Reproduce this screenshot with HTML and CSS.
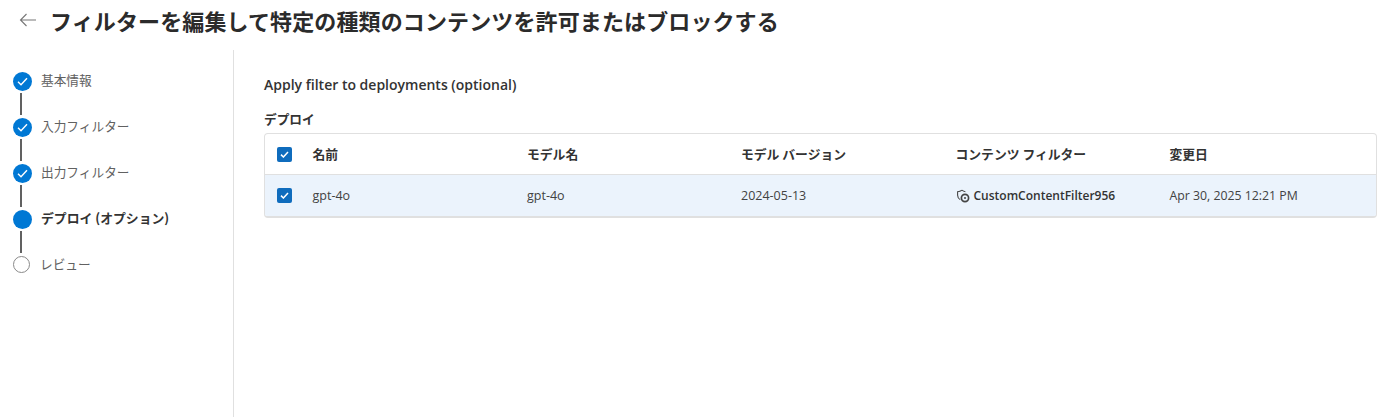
FILE: index.html
```html
<!DOCTYPE html>
<html lang="ja">
<head>
  <meta charset="UTF-8" />
  <title>フィルターの編集</title>
  <link rel="stylesheet" href="styles.css">
</head>
<body>
  <header class="header">
    <svg class="back" width="18" height="14" viewBox="0 0 18 14" fill="none" stroke="#767676" stroke-width="1.1">
      <path d="M17 7H1.5M7.5 1L1.5 7l6 6"/>
    </svg>
    <h1>フィルターを編集して特定の種類のコンテンツを許可またはブロックする</h1>
  </header>

  <div class="body">
    <aside class="sidebar">
      <ol class="steps">
        <li class="step done">
          <span class="dot"><svg width="11" height="9" viewBox="0 0 11 9" fill="none" stroke="#fff" stroke-width="1.4"><path d="M1 4.8l3 3L10 1.2"/></svg></span>
          <span class="step-label">基本情報</span>
        </li>
        <li class="step done">
          <span class="dot"><svg width="11" height="9" viewBox="0 0 11 9" fill="none" stroke="#fff" stroke-width="1.4"><path d="M1 4.8l3 3L10 1.2"/></svg></span>
          <span class="step-label">入力フィルター</span>
        </li>
        <li class="step done">
          <span class="dot"><svg width="11" height="9" viewBox="0 0 11 9" fill="none" stroke="#fff" stroke-width="1.4"><path d="M1 4.8l3 3L10 1.2"/></svg></span>
          <span class="step-label">出力フィルター</span>
        </li>
        <li class="step current">
          <span class="dot"></span>
          <span class="step-label">デプロイ (オプション)</span>
        </li>
        <li class="step todo">
          <span class="dot"></span>
          <span class="step-label">レビュー</span>
        </li>
      </ol>
    </aside>

    <main class="main">
      <h2>Apply filter to deployments (optional)</h2>
      <h3>デプロイ</h3>
      <div class="table">
        <div class="row head">
          <span class="check"><svg width="9" height="7" viewBox="0 0 9 7" fill="none" stroke="#fff" stroke-width="1.5"><path d="M1 3.6l2.4 2.4L8 1"/></svg></span>
          <span class="cell">名前</span>
          <span class="cell">モデル名</span>
          <span class="cell">モデル バージョン</span>
          <span class="cell">コンテンツ フィルター</span>
          <span class="cell">変更日</span>
        </div>
        <div class="row selected">
          <span class="check"><svg width="9" height="7" viewBox="0 0 9 7" fill="none" stroke="#fff" stroke-width="1.5"><path d="M1 3.6l2.4 2.4L8 1"/></svg></span>
          <span class="cell">gpt-4o</span>
          <span class="cell">gpt-4o</span>
          <span class="cell">2024-05-13</span>
          <span class="cell filter-cell">
            <svg width="14" height="14" viewBox="0 0 14 14" fill="none" stroke="#444" stroke-width="1.1">
              <path d="M6 1.2C4.8 2.2 3.2 2.8 1.6 2.8v3.4c0 1.9.9 3.4 2.6 4.4"/>
              <path d="M6 1.2c1 .9 2.2 1.4 3.4 1.6"/>
              <circle cx="9" cy="9" r="3.6" stroke-width="1.7"/>
              <circle cx="9" cy="9" r="1" fill="#444" stroke="none"/>
            </svg>
            CustomContentFilter956
          </span>
          <span class="cell date-cell">Apr 30, 2025 12:21 PM</span>
        </div>
      </div>
    </main>
  </div>
</body>
</html>
```

FILE: styles.css
```css
* {
  margin: 0;
  padding: 0;
  box-sizing: border-box;
}

body {
  font-family: 'Open Sans', 'Noto Sans CJK JP', sans-serif;
  color: #242424;
  background-color: #fff;
  height: 417px;
  overflow: hidden;
  display: flex;
  flex-direction: column;
}

.header {
  height: 50px;
  flex-shrink: 0;
  display: flex;
  align-items: center;
  gap: 13px;
  padding: 0 0 10px 19px;
}

.header h1 {
  font-family: 'Noto Sans CJK JP', sans-serif;
  font-size: 22px;
  line-height: 30px;
  font-weight: 700;
  letter-spacing: 0.12px;
  color: #2b2b2b;
}

.body {
  flex: 1;
  display: flex;
}

.sidebar {
  width: 234px;
  flex-shrink: 0;
  border-right: 1px solid #e0e0e0;
  padding: 22px 0 0 13px;
}

.steps {
  list-style: none;
}

.step {
  height: 46px;
  display: flex;
  align-items: flex-start;
  gap: 9px;
  position: relative;
  font-family: 'Noto Sans CJK JP', sans-serif;
  font-size: 12.7px;
  line-height: 18px;
  color: #616161;
}

.step-label {
  margin-top: -1px;
}

/* connector between two dots */
.step:not(:last-child)::after {
  content: '';
  position: absolute;
  left: 7px;
  top: 21px;
  width: 2px;
  height: 22px;
  background-color: #616161;
}

.dot {
  width: 19px;
  height: 19px;
  border-radius: 50%;
  background-color: #0078d4;
  display: flex;
  align-items: center;
  justify-content: center;
  flex-shrink: 0;
}

.step.current .step-label {
  font-weight: 700;
  font-size: 12.85px;
  color: #333;
}

.step.todo .dot {
  width: 17px;
  height: 17px;
  margin-right: 1px;
  background-color: #fff;
  border: 1px solid #8a8a8a;
}

.main {
  flex: 1;
  padding: 25px 23px 0 30px;
}

.main h2 {
  font-size: 14px;
  line-height: 20px;
  font-weight: 600;
  color: #333;
}

.main h3 {
  font-family: 'Noto Sans CJK JP', sans-serif;
  font-size: 12.7px;
  line-height: 18px;
  font-weight: 700;
  margin-top: 15px;
  margin-bottom: 5px;
  color: #333;
}

.table {
  border: 1px solid #e0e0e0;
  border-bottom-width: 2px;
  border-radius: 4px;
  overflow: hidden;
}

.row {
  display: grid;
  grid-template-columns: 47.5px 214.5px 214px 214.5px 214px 1fr;
  align-items: center;
  font-size: 12.5px;
}

.row.head {
  height: 41px;
  border-bottom: 1px solid #e0e0e0;
  font-family: 'Noto Sans CJK JP', sans-serif;
  font-size: 12.8px;
  font-weight: 700;
  color: #333;
}

.row.head .cell {
  padding-bottom: 2px;
}

.row.selected {
  height: 41px;
  background-color: #ebf3fc;
  color: #424242;
}

.check {
  width: 15px;
  height: 15px;
  margin-left: 12px;
  border-radius: 2px;
  background-color: #0f6cbd;
  display: flex;
  align-items: center;
  justify-content: center;
}

.filter-cell {
  display: flex;
  align-items: center;
  gap: 4px;
  font-size: 12px;
  font-weight: 600;
  color: #333;
}

.date-cell {
  font-size: 12.3px;
}
```
